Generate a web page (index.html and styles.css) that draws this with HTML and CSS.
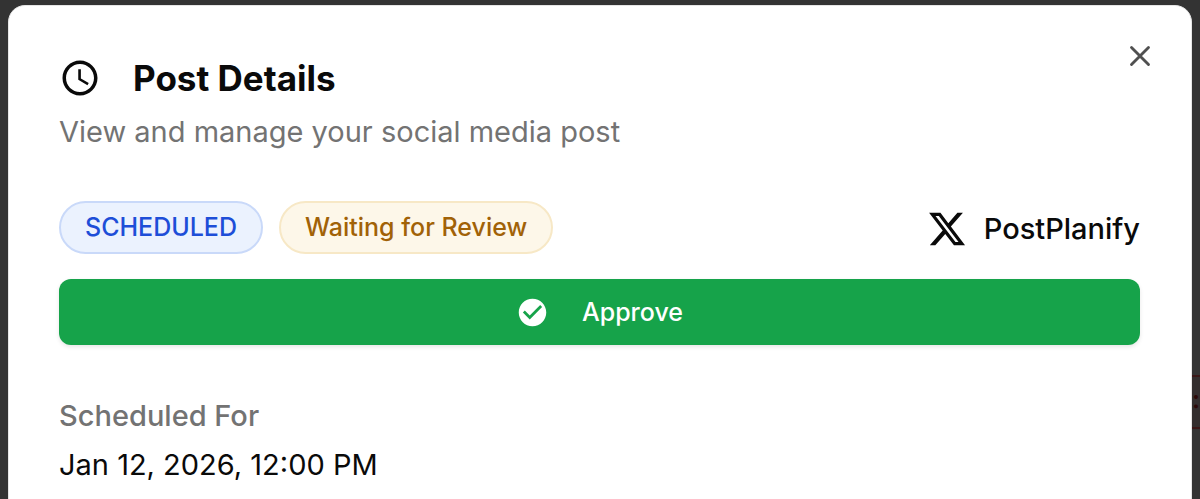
FILE: index.html
```
<!DOCTYPE html>
<html lang="en">
<head>
<meta charset="utf-8">
<meta name="viewport" content="width=device-width, initial-scale=1">
<title>Post Details</title>
<link rel="stylesheet" href="styles.css">
</head>
<body>
<div class="backdrop">
  <div class="backdrop-row" aria-hidden="true">:0</div>
  <main class="dialog" role="dialog" aria-labelledby="title" aria-describedby="description">
    <button class="close" type="button" aria-label="Close">
      <svg viewBox="0 0 24 24" fill="none" stroke="currentColor" stroke-width="2" stroke-linecap="round"><path d="M18 6 6 18M6 6l12 12"/></svg>
    </button>
    <header class="header">
      <h1 class="title" id="title">
        <svg class="clock" viewBox="0 0 24 24" fill="currentColor" aria-hidden="true"><path d="M11.99 2C6.47 2 2 6.48 2 12s4.47 10 9.99 10C17.52 22 22 17.52 22 12S17.52 2 11.99 2zM12 20c-4.42 0-8-3.58-8-8s3.58-8 8-8 8 3.58 8 8-3.58 8-8 8z"/><path d="M12.5 7H11v6l5.25 3.15.75-1.23-4.5-2.67z"/></svg>
        <span>Post Details</span>
      </h1>
      <p class="description" id="description">View and manage your social media post</p>
    </header>
    <div class="status">
      <div class="badges">
        <span class="badge badge-scheduled">SCHEDULED</span>
        <span class="badge badge-review">Waiting for Review</span>
      </div>
      <div class="account">
        <svg class="network" viewBox="0 0 24 24" fill="currentColor" role="img" aria-label="X"><path d="M18.244 2.25h3.308l-7.227 8.26 8.502 11.24H16.17l-5.214-6.817L4.99 21.75H1.68l7.73-8.835L1.254 2.25H8.08l4.713 6.231zm-1.161 17.52h1.833L7.084 4.126H5.117z"/></svg>
        <span>PostPlanify</span>
      </div>
    </div>
    <button class="approve" type="button">
      <svg class="check" viewBox="0 0 24 24" fill="currentColor" aria-hidden="true"><path d="M12 2C6.48 2 2 6.48 2 12s4.48 10 10 10 10-4.48 10-10S17.52 2 12 2zm-2 15-5-5 1.41-1.41L10 14.17l7.59-7.59L19 8l-9 9z"/></svg>
      <span>Approve</span>
    </button>
    <dl class="details">
      <dt>Scheduled For</dt>
      <dd>Jan 12, 2026, 12:00 PM</dd>
    </dl>
  </main>
</div>
</body>
</html>
```
FILE: styles.css
```
* {
  box-sizing: border-box;
}

body {
  margin: 0;
  background: #333;
  color: #0a0a0a;
  font-family: Inter, "Liberation Sans", sans-serif;
  font-size: 29px;
  line-height: 40px;
}

.backdrop {
  position: relative;
  height: 100vh;
  padding: 5px 8px 0;
  overflow: hidden;
}

.backdrop-row {
  position: absolute;
  top: 375px;
  right: 0;
  width: 8px;
  padding: 4px 0;
  border: solid #3a1717;
  border-width: 2px 0;
  background: #332e2e;
  color: #2b0808;
  font-size: 25px;
  font-weight: 600;
  line-height: 42px;
  overflow: hidden;
  white-space: nowrap;
}

.dialog {
  position: relative;
  min-height: 100vh;
  padding: 51px 51px 50px 50px;
  border: 1px solid #e5e5e5;
  border-radius: 17px;
  background: #fff;
}

.close {
  position: absolute;
  top: 33px;
  right: 34px;
  width: 34px;
  height: 34px;
  padding: 0;
  border: 0;
  background: none;
  color: #505050;
}

.close svg {
  display: block;
}

.header {
  display: grid;
  gap: 13px;
}

.title {
  display: flex;
  align-items: center;
  gap: 32px;
  margin: 0;
  font-size: 35px;
  font-weight: 700;
  line-height: 42px;
}

.clock {
  width: 42px;
  height: 42px;
}

.description {
  margin: 0;
  color: #737373;
}

.status {
  display: flex;
  align-items: center;
  justify-content: space-between;
  margin-top: 49px;
}

.badges {
  display: flex;
  gap: 16px;
}

.badge {
  padding: 6px 24px;
  border: 2px solid;
  border-radius: 27px;
  font-size: 25px;
  font-weight: 500;
  line-height: 37px;
}

.badge-scheduled {
  border-color: #c9d9f9;
  background: #ebf2fe;
  color: #1d4ed8;
}

.badge-review {
  border-color: #f7e8c6;
  background: #fdf7e9;
  color: #a16207;
}

.account {
  display: flex;
  align-items: center;
  gap: 17px;
  padding-top: 2px;
  font-weight: 500;
}

.network {
  width: 40px;
  height: 40px;
}

.approve {
  display: flex;
  align-items: center;
  justify-content: center;
  gap: 33px;
  width: 100%;
  margin-top: 25px;
  padding: 13px;
  border: 0;
  border-radius: 12px;
  background: #16a34a;
  box-shadow: 0 2px 4px rgb(0 0 0 / 10%);
  color: #fff;
  font: inherit;
  font-size: 25px;
  font-weight: 500;
  line-height: 40px;
}

.check {
  width: 33px;
  height: 33px;
}

.details {
  display: grid;
  gap: 9px;
  margin: 51px 0 0;
}

.details dt {
  color: #737373;
  font-weight: 500;
}

.details dd {
  margin: 0;
}
```
